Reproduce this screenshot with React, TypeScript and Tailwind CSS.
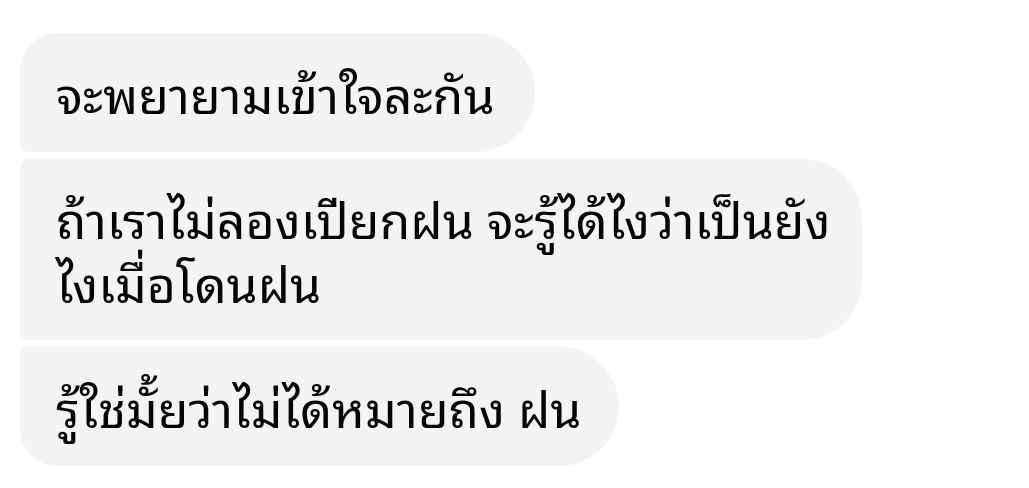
import React from "react";

export default function App() {
  const font = { fontFamily: '"Noto Sans Thai Looped", "Noto Sans Thai", "Noto Sans", "DejaVu Sans", sans-serif' };
  return (
    <div className="w-[1029px] h-[488px] bg-white overflow-hidden">
      <div className="flex flex-col items-start gap-[7px] pt-[33px] pl-[20px]" style={font}>
        <div className="bg-[#f3f4f6] text-[#050505] text-[50px] leading-[62px] pt-[28px] pb-[29px] pl-[36px] pr-[40px] rounded-tl-[38px] rounded-bl-[8px] rounded-r-[60px] whitespace-nowrap">
          จะพยายามเข้าใจละกัน
        </div>
        <div className="bg-[#f3f4f6] text-[#050505] text-[50px] leading-[64px] pt-[26px] pb-[27px] pl-[36px] pr-[40px] w-[842px] rounded-l-[8px] rounded-r-[60px] whitespace-nowrap overflow-hidden">
          ถ้าเราไม่ลองเปียกฝน จะรู้ได้ไงว่าเป็นยัง
          <br />
          ไงเมื่อโดนฝน
        </div>
        <div className="bg-[#f3f4f6] text-[#050505] text-[50px] leading-[62px] pt-[28px] pb-[29px] pl-[36px] pr-[38px] rounded-tl-[8px] rounded-bl-[38px] rounded-r-[60px] whitespace-nowrap">
          รู้ใช่มั้ยว่าไม่ได้หมายถึง ฝน
        </div>
      </div>
    </div>
  );
}
